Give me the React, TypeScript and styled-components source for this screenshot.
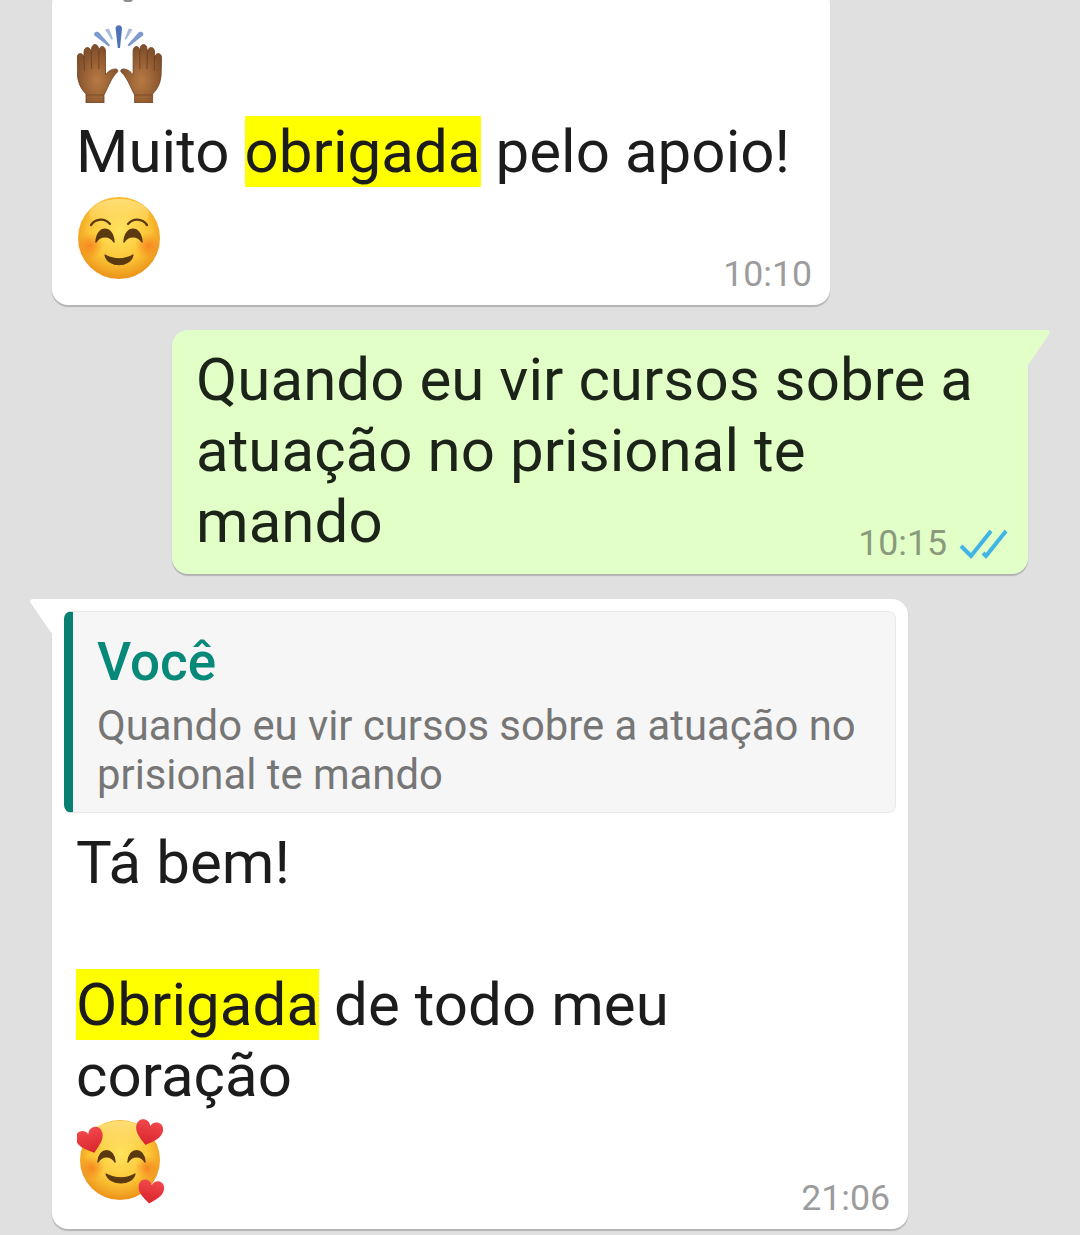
import React from "react";
import styled, { createGlobalStyle } from "styled-components";

const Global = createGlobalStyle`
  html, body { margin: 0; padding: 0; background: #e0e0e0; }
  body { font-family: Roboto, "Liberation Sans", sans-serif; }
`;

const Page = styled.main`
  width: 1080px;
  height: 1235px;
  overflow: hidden;
  box-sizing: border-box;
  padding: 0 52px;
  display: flex;
  flex-direction: column;
  gap: 25px;
  background: #e0e0e0;
`;

const Bubble = styled.section<{ $out?: boolean; $width: number; $clipped?: boolean }>`
  position: relative;
  box-sizing: border-box;
  flex: none;
  width: ${(p) => p.$width}px;
  align-self: ${(p) => (p.$out ? "flex-end" : "flex-start")};
  margin-top: ${(p) => (p.$clipped ? "-12px" : "0")};
  padding: 12px 12px 10px;
  background: ${(p) => (p.$out ? "#e1ffc7" : "#ffffff")};
  color: ${(p) => (p.$out ? "#1c2318" : "#1c1c1c")};
  border-radius: ${(p) => (p.$out ? "16px 0 16px 16px" : p.$clipped ? "16px" : "0 16px 16px 16px")};
  box-shadow: 0 2px 1px rgba(0, 0, 0, 0.2);
`;

const Tail = styled.svg<{ $out?: boolean }>`
  position: absolute;
  top: 0;
  ${(p) => (p.$out ? "right: -22px;" : "left: -22px;")}
  width: 22px;
  height: 36px;
`;

const Content = styled.div<{ $pad?: boolean }>`
  padding: ${(p) => (p.$pad ? "2px" : "0")} 6px 0 12px;
`;

const Line = styled.div`
  font-size: 60px;
  letter-spacing: 0.05px;
  line-height: 71px;
  height: 71px;
  white-space: nowrap;
`;

const Mark = styled.span`
  background: #ffff00;
`;

const HandsRow = styled.div`
  display: flex;
  height: 78px;
  margin: 25px 0 13px 1px;
`;

const FooterRow = styled.div<{ $top: number }>`
  display: flex;
  justify-content: space-between;
  align-items: flex-end;
  height: 108px;
  padding-top: ${(p) => p.$top}px;
  padding-left: 1px;
  box-sizing: border-box;
`;

const EmojiSvg = styled.svg`
  display: block;
  align-self: flex-start;
  filter: blur(0.5px);
`;

const LastRow = styled.div`
  display: flex;
  justify-content: space-between;
  align-items: flex-start;
  height: 78px;
`;

const Meta = styled.div`
  display: flex;
  align-items: center;
  gap: 12px;
  align-self: flex-end;
  margin-right: 2px;
`;

const Time = styled.span<{ $out?: boolean }>`
  font-size: 35.7px;
  line-height: 41px;
  color: ${(p) => (p.$out ? "#8a9a7c" : "#9c9c9c")};
`;

const Ticks = styled.svg`
  display: block;
  width: 49px;
  height: 30px;
`;

const TopSliver = styled.div`
  position: absolute;
  top: 11px;
  left: 71px;
  width: 10px;
  height: 3px;
  border-radius: 0 0 5px 5px;
  background: #8f8f8f;
`;

const Quote = styled.blockquote`
  box-sizing: border-box;
  height: 202px;
  margin: 0 0 14px;
  padding: 21px 12px 0 24px;
  background: #f6f6f6;
  border: 1px solid #e8e8e8;
  border-left: 9px solid #07806f;
  border-radius: 8px;
`;

const QuoteAuthor = styled.div`
  font-size: 53px;
  font-weight: 500;
  line-height: 59px;
  color: #07897a;
  margin-bottom: 9px;
`;

const QuoteText = styled.div`
  font-size: 41.8px;
  line-height: 49px;
  color: #767676;
  white-space: nowrap;
`;

const Hand = () => (
  <g>
    <path
      d="M9 78 L9 69 C4 64 1 58 0.5 50 L0 33 C0 27 6.5 27 6.8 33 L7 27 C7 21 13.8 21 14 27 L14.6 24 C14.6 18 21.4 18 21.6 24 L22 26 C22 20 28.4 20 28.5 26 L28.5 50 C31 46 35 44 38 44 C41 44 41.5 46 40 47.5 C35 52 32 60 28 68 L27 70 L27 78 Z"
      fill="url(#handGrad)"
      stroke="#6f4122"
      strokeWidth="0.8"
    />
    <path d="M6.9 31 L7.4 46 M14.2 26 L14.6 44 M21.8 26 L21.8 44" stroke="#6a3c1d" strokeWidth="1.1" opacity="0.75" />
    <path d="M9 70 L27 70" stroke="#6a3c1d" strokeWidth="1.4" opacity="0.45" />
  </g>
);

const Hands = () => (
  <EmojiSvg width="85" height="78" viewBox="0 0 85 78">
    <defs>
      <radialGradient id="handGrad" cx="50%" cy="62%" r="55%">
        <stop offset="0%" stopColor="#b87a44" />
        <stop offset="100%" stopColor="#82502b" />
      </radialGradient>
    </defs>
    <path d="M38.6 3.5 C38.6 -1 45 -1 45 3.5 L43 23 L40.8 23 Z" fill="#4e72b8" />
    <path d="M17.5 10.5 C16 7.6 20 5.6 22 7.6 L33 20 L31.6 21.6 Z" fill="#7f9ad0" />
    <path d="M66 10.5 C67.5 7.6 63.5 5.6 61.5 7.6 L50.5 20 L52 21.6 Z" fill="#7f9ad0" />
    <path d="M28 4.6 L32 3.6 L36 14 L34.6 14.8 Z" fill="#a9bbdd" />
    <path d="M55.6 4.6 L51.6 3.6 L47.6 14 L49 14.8 Z" fill="#a9bbdd" />
    <Hand />
    <g transform="translate(84.6 0) scale(-1 1)">
      <Hand />
    </g>
  </EmojiSvg>
);

const FaceDefs = ({ id }: { id: string }) => (
  <defs>
    <radialGradient id={`${id}Face`} cx="50%" cy="42%" r="58%">
      <stop offset="0%" stopColor="#ffe45e" />
      <stop offset="62%" stopColor="#fcc636" />
      <stop offset="100%" stopColor="#ec921a" />
    </radialGradient>
    <linearGradient id={`${id}Shine`} x1="0" y1="0" x2="0" y2="1">
      <stop offset="0%" stopColor="#ffe27e" stopOpacity="0.9" />
      <stop offset="100%" stopColor="#ffe27e" stopOpacity="0" />
    </linearGradient>
    <radialGradient id={`${id}Blush`}>
      <stop offset="0%" stopColor="#f57e1e" stopOpacity="0.85" />
      <stop offset="100%" stopColor="#f57e1e" stopOpacity="0" />
    </radialGradient>
    <linearGradient id={`${id}Heart`} x1="0" y1="0" x2="0" y2="1">
      <stop offset="0%" stopColor="#f0484a" />
      <stop offset="100%" stopColor="#d9242e" />
    </linearGradient>
  </defs>
);

const Smile = () => (
  <EmojiSvg width="84" height="84" viewBox="0 0 84 84">
    <FaceDefs id="s" />
    <circle cx="42" cy="42" r="41" fill="url(#sFace)" />
    <ellipse cx="42" cy="18" rx="30" ry="15" fill="url(#sShine)" />
    <circle cx="13" cy="50" r="13" fill="url(#sBlush)" />
    <circle cx="71" cy="50" r="13" fill="url(#sBlush)" />
    <path d="M14 29 C19 22 28 22 33 28" fill="none" stroke="#5c3a10" strokeWidth="2.2" strokeLinecap="round" />
    <path d="M51 28 C56 22 65 22 70 29" fill="none" stroke="#5c3a10" strokeWidth="2.2" strokeLinecap="round" />
    <path d="M19 46 C20 29 36 29 37 46 C33 39 23 39 19 46 Z" fill="#5c3a10" stroke="#5c3a10" strokeWidth="1.5" strokeLinejoin="round" />
    <path d="M47 46 C48 29 64 29 65 46 C61 39 51 39 47 46 Z" fill="#5c3a10" stroke="#5c3a10" strokeWidth="1.5" strokeLinejoin="round" />
    <path d="M28 59 C37 64 47 64 56 59 C53 72 31 72 28 59 Z" fill="#5c3a10" stroke="#5c3a10" strokeWidth="1.2" strokeLinejoin="round" />
  </EmojiSvg>
);

const heart = "M0 -6 C3 -15 16 -14 16 -3 C16 6 6 12 0 17 C-6 12 -16 6 -16 -3 C-16 -14 -3 -15 0 -6 Z";

const Love = () => (
  <EmojiSvg width="88" height="86" viewBox="0 0 88 86">
    <FaceDefs id="l" />
    <circle cx="43" cy="42" r="40" fill="url(#lFace)" />
    <ellipse cx="43" cy="18" rx="30" ry="15" fill="url(#lShine)" />
    <circle cx="15" cy="50" r="12" fill="url(#lBlush)" />
    <circle cx="70" cy="50" r="12" fill="url(#lBlush)" />
    <path d="M21 44 C22 29 37 29 38 44 C34 37 25 37 21 44 Z" fill="#5c3a10" stroke="#5c3a10" strokeWidth="1.5" strokeLinejoin="round" />
    <path d="M51 44 C52 29 67 29 68 44 C64 37 55 37 51 44 Z" fill="#5c3a10" stroke="#5c3a10" strokeWidth="1.5" strokeLinejoin="round" />
    <path d="M29 56 C38 61 50 61 58 56 C55 68 33 68 29 56 Z" fill="#5c3a10" stroke="#5c3a10" strokeWidth="1.2" strokeLinejoin="round" />
    <path d={heart} fill="url(#lHeart)" transform="translate(13 21) rotate(-18) scale(0.85)" />
    <path d={heart} fill="url(#lHeart)" transform="translate(72 13) rotate(14) scale(0.85)" />
    <path d={heart} fill="url(#lHeart)" transform="translate(74 72) rotate(8) scale(0.8)" />
  </EmojiSvg>
);

export default function App() {
  return (
    <>
      <Global />
      <Page>
        <Bubble $width={778} $clipped>
          <TopSliver />
          <Content>
            <HandsRow>
              <Hands />
            </HandsRow>
            <Line>
              Muito <Mark>obrigada</Mark> pelo apoio!
            </Line>
            <FooterRow $top={9}>
              <Smile />
              <Time>10:10</Time>
            </FooterRow>
          </Content>
        </Bubble>

        <Bubble $width={856} $out>
          <Tail $out viewBox="0 0 22 36">
            <path d="M0 0 L19 0 C21.5 0 22.6 2 21.2 4 L0 35 Z" fill="#e1ffc7" />
          </Tail>
          <Content $pad>
            <Line>Quando eu vir cursos sobre a</Line>
            <Line>atuação no prisional te</Line>
            <LastRow>
              <Line>mando</Line>
              <Meta>
                <Time $out>10:15</Time>
                <Ticks viewBox="0 0 49 30">
                  <path d="M2 17 L12 27 L32 2" fill="none" stroke="#41b4e6" strokeWidth="4" />
                  <path d="M24 24 L27 27 L47 2" fill="none" stroke="#41b4e6" strokeWidth="4" />
                </Ticks>
              </Meta>
            </LastRow>
          </Content>
        </Bubble>

        <Bubble $width={856}>
          <Tail viewBox="0 0 22 36">
            <path d="M22 0 L3 0 C0.5 0 -0.6 2 0.8 4 L22 35 Z" fill="#ffffff" />
          </Tail>
          <Quote>
            <QuoteAuthor>Você</QuoteAuthor>
            <QuoteText>Quando eu vir cursos sobre a atuação no</QuoteText>
            <QuoteText>prisional te mando</QuoteText>
          </Quote>
          <Content>
            <Line>Tá bem!</Line>
            <Line />
            <Line>
              <Mark>Obrigada</Mark> de todo meu
            </Line>
            <Line>coração</Line>
            <FooterRow $top={7}>
              <Love />
              <Time>21:06</Time>
            </FooterRow>
          </Content>
        </Bubble>
      </Page>
    </>
  );
}
